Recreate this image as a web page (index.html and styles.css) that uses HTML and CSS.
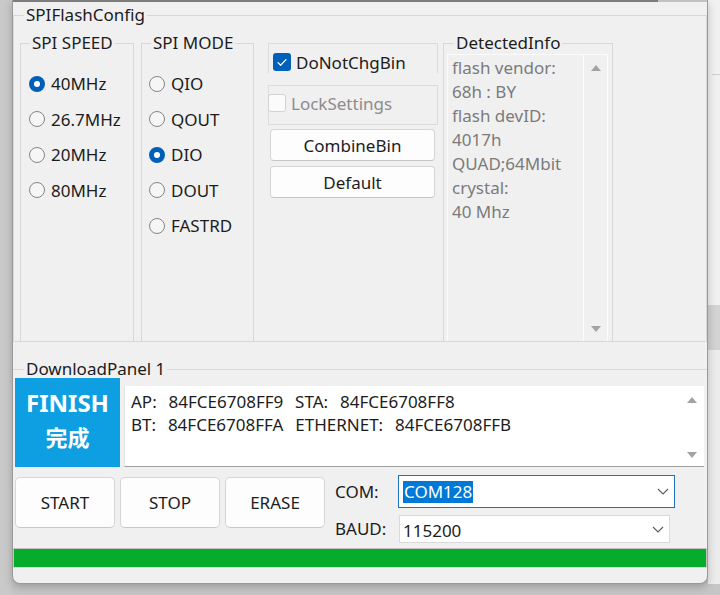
FILE: index.html
```html
<!DOCTYPE html>
<html lang="en">

<head>
    <meta charset="UTF-8">
    <meta name="viewport" content="width=device-width, initial-scale=1.0">
    <title>SPIFlashConfig</title>
    <link rel="stylesheet" href="styles.css">
</head>

<body>
    <div class="screen">
        <div class="edge-left"></div>

        <div class="window">
            <div class="topline"><span class="dark"></span><span class="light"></span></div>

            <fieldset class="group flash">
                <legend>SPIFlashConfig</legend>
                <div class="config-row">
                    <fieldset class="group sub speed">
                        <legend>SPI SPEED</legend>
                        <div class="radio-list">
                            <label class="radio checked"><span class="dot"></span>40MHz</label>
                            <label class="radio"><span class="dot"></span>26.7MHz</label>
                            <label class="radio"><span class="dot"></span>20MHz</label>
                            <label class="radio"><span class="dot"></span>80MHz</label>
                        </div>
                    </fieldset>

                    <fieldset class="group sub mode">
                        <legend>SPI MODE</legend>
                        <div class="radio-list">
                            <label class="radio"><span class="dot"></span>QIO</label>
                            <label class="radio"><span class="dot"></span>QOUT</label>
                            <label class="radio checked"><span class="dot"></span>DIO</label>
                            <label class="radio"><span class="dot"></span>DOUT</label>
                            <label class="radio"><span class="dot"></span>FASTRD</label>
                        </div>
                    </fieldset>

                    <div class="options">
                        <div class="frame frame-top">
                            <label class="check checked">
                                <span class="box">
                                    <svg width="18" height="18" viewBox="0 0 18 18">
                                        <path d="M5 9.6 L7.6 12.2 L13 6.6" fill="none" stroke="#fff" stroke-width="1.3" stroke-linecap="round" stroke-linejoin="round" />
                                    </svg>
                                </span>DoNotChgBin
                            </label>
                        </div>
                        <div class="frame frame-lock">
                            <label class="check disabled"><span class="box"></span>LockSettings</label>
                        </div>
                        <button class="btn">CombineBin</button>
                        <button class="btn">Default</button>
                    </div>

                    <fieldset class="group sub info">
                        <legend>DetectedInfo</legend>
                        <div class="info-box">
                            <div class="info-text">
                                flash vendor:<br>
                                68h : BY<br>
                                flash devID:<br>
                                4017h<br>
                                QUAD;64Mbit<br>
                                crystal:<br>
                                40 Mhz
                            </div>
                            <div class="scroll">
                                <span class="arrow up"></span>
                                <span class="arrow down"></span>
                            </div>
                        </div>
                    </fieldset>
                </div>
            </fieldset>

            <fieldset class="group download">
                <legend>DownloadPanel 1</legend>
                <div class="status-row">
                    <div class="finish">
                        <span class="finish-en">FINISH</span>
                        <span class="finish-cn">完成</span>
                    </div>
                    <div class="mac-box">
                        <div class="mac-text">
                            <div class="mac-line">AP:  84FCE6708FF9  STA:  84FCE6708FF8</div>
                            <div class="mac-line">BT:  84FCE6708FFA  ETHERNET:  84FCE6708FFB</div>
                        </div>
                        <div class="scroll">
                            <span class="arrow up"></span>
                            <span class="arrow down"></span>
                        </div>
                    </div>
                </div>

                <div class="control-row">
                    <button class="big-btn start">START</button>
                    <button class="big-btn">STOP</button>
                    <button class="big-btn">ERASE</button>

                    <div class="port-grid">
                        <span class="port-label">COM:</span>
                        <div class="combo com">
                            <span class="selected">COM128</span>
                            <svg class="chevron" width="12" height="7" viewBox="0 0 12 7">
                                <path d="M1 1 L6 6 L11 1" fill="none" stroke="#5c5c5c" stroke-width="1.1" />
                            </svg>
                        </div>
                        <span class="port-label">BAUD:</span>
                        <div class="combo baud">
                            <span>115200</span>
                            <svg class="chevron" width="12" height="7" viewBox="0 0 12 7">
                                <path d="M1 1 L6 6 L11 1" fill="none" stroke="#5c5c5c" stroke-width="1.1" />
                            </svg>
                        </div>
                    </div>
                </div>

                <div class="progress">
                    <div class="bar" style="width: 100%"></div>
                </div>
            </fieldset>
        </div>

        <div class="edge-right">
            <div class="er-top"><span class="er-line"></span></div>
            <div class="er-gray"></div>
            <div class="er-low"></div>
        </div>
    </div>
</body>

</html>
```

FILE: styles.css
```css
* {
    box-sizing: border-box;
}

body {
    margin: 0;
    width: 720px;
    height: 595px;
    overflow: hidden;
    background: #c6c6c6;
    font-family: "Noto Sans", "Noto Sans CJK SC", sans-serif;
    font-size: 17px;
    color: #1c1c1c;
}

.screen {
    display: flex;
    height: 595px;
}

.edge-left {
    width: 12px;
    flex: none;
    background: #c9c9c9;
}

.window {
    width: 696px;
    height: 584px;
    flex: none;
    display: flex;
    flex-direction: column;
    background: #f0f0f0;
    border: 1px solid #9a9a9a;
    border-top: none;
    border-radius: 0 0 8px 8px;
    box-shadow: 0 3px 8px rgba(0, 0, 0, 0.22);
    position: relative;
    z-index: 1;
}

.topline {
    display: flex;
    height: 2px;
}

.topline .dark {
    flex: 1;
    background: #7c7c7c;
}

.topline .light {
    width: 49px;
    background: #c2c2c2;
}

/* group boxes */
.group {
    margin: 0;
    padding: 0;
    min-width: 0;
    border: 1px solid #d8d8d8;
}

.group legend {
    padding: 0 2px;
    line-height: 20px;
    font-size: 17px;
}

.flash {
    margin-top: 3px;
}

.flash > legend {
    margin-left: 10px;
}

.config-row {
    display: flex;
    height: 316px;
    padding: 8px 0 0 6px;
}

.sub {
    border-bottom: none;
    display: flex;
    flex-direction: column;
}

.sub legend {
    margin-left: 9px;
}

.speed {
    width: 114px;
}

.mode {
    width: 113px;
    margin-left: 7px;
}

.radio-list {
    padding: 13px 0 0 8px;
}

.mode .radio-list {
    padding-left: 7px;
}

.radio {
    display: flex;
    align-items: center;
    gap: 6px;
    height: 35.5px;
    white-space: nowrap;
}

.dot {
    width: 16px;
    height: 16px;
    border-radius: 50%;
    border: 1px solid #858585;
    background: #f6f6f6;
    flex: none;
}

.radio.checked .dot {
    border: 5px solid #005fb8;
    background: #fff;
}

/* checkbox column */
.options {
    width: 170px;
    margin: 10px 0 0 14px;
    display: flex;
    flex-direction: column;
}

.frame {
    border: 1px solid #dcdcdc;
}

.frame-top {
    height: 30px;
    border-bottom: none;
}

.frame-lock {
    height: 40px;
    margin-top: 12px;
}

.check {
    display: flex;
    align-items: center;
    gap: 5px;
    height: 18px;
    white-space: nowrap;
}

.frame-top .check {
    margin: 9px 0 0 4px;
}

.frame-lock .check {
    margin: 8px 0 0 -1px;
}

.box {
    width: 18px;
    height: 18px;
    border-radius: 3px;
    flex: none;
    display: flex;
}

.check.checked .box {
    background: #005fb8;
}

.check.disabled .box {
    border: 1px solid #d2d2d2;
    background: #fbfbfb;
}

.check.disabled {
    color: #8c8c8c;
}

.btn {
    width: 165px;
    height: 32px;
    margin: 5px 0 0 2px;
    font-family: inherit;
    font-size: 17px;
    color: #1c1c1c;
    background: #fdfdfd;
    border: 1px solid #d5d5d5;
    border-bottom-color: #c6c6c6;
    border-radius: 4px;
    padding: 0;
}

.frame-lock + .btn {
    margin-top: 4px;
}

/* detected info */
.info {
    width: 170px;
    margin-left: 5px;
}

.info legend {
    margin-left: 10px;
}

.info-box {
    flex: 1;
    display: flex;
    margin: 1px 4px 0 3px;
    border: 1px solid #fbfbfb;
    border-bottom: none;
}

.info-text {
    flex: 1;
    padding: 1px 0 0 4px;
    line-height: 24px;
    color: #7b7b7b;
    white-space: nowrap;
}

.scroll {
    width: 24px;
    flex: none;
    display: flex;
    flex-direction: column;
    justify-content: space-between;
    align-items: center;
    border-left: 1px solid #fbfbfb;
}

.arrow {
    width: 0;
    height: 0;
    border-left: 5px solid transparent;
    border-right: 5px solid transparent;
}

.arrow.up {
    border-bottom: 6px solid #a3a3a3;
    margin-top: 10px;
}

.arrow.down {
    border-top: 6px solid #a3a3a3;
    margin-bottom: 9px;
}

/* download panel */
.download {
    margin-top: 17px;
    border-left: none;
    border-right: none;
    border-bottom: none;
}

.download > legend {
    margin-left: 11px;
}

.status-row {
    display: flex;
    height: 89px;
    margin-top: -1px;
}

.finish {
    width: 105px;
    margin-left: 2px;
    padding-top: 10px;
    background: #0e9fe2;
    color: #fff;
    font-weight: 700;
    display: flex;
    flex-direction: column;
    align-items: center;
}

.finish-en {
    font-size: 24px;
    line-height: 30px;
}

.finish-cn {
    font-size: 22px;
    line-height: 38px;
}

.mac-box {
    flex: 1;
    height: 81px;
    align-self: flex-end;
    margin: 0 3px 0 4px;
    display: flex;
    background: #fff;
    border-left: 1px solid #e4e4e4;
    border-bottom: 1px solid #9f9f9f;
}

.mac-text {
    flex: 1;
    padding: 4px 0 0 6px;
    line-height: 23px;
}

.mac-line {
    white-space: pre;
    word-spacing: 1.5px;
}

.mac-box .scroll {
    border-left: none;
}

.mac-box .arrow.up {
    margin-top: 11px;
}

.mac-box .arrow.down {
    margin-bottom: 8px;
}

.control-row {
    display: flex;
    align-items: flex-start;
    gap: 5px;
    margin-top: 10px;
}

.big-btn {
    width: 100px;
    height: 51px;
    padding: 0;
    font-family: inherit;
    font-size: 17px;
    color: #1c1c1c;
    background: #fdfdfd;
    border: 1px solid #d6d6d6;
    border-bottom-color: #c8c8c8;
    border-radius: 5px;
}

.big-btn.start {
    margin-left: 2px;
}

.port-grid {
    display: grid;
    grid-template-columns: 63px auto;
    grid-template-rows: 33px 28px;
    row-gap: 7px;
    align-items: center;
    margin: -2px 0 0 5px;
}

.port-label {
    line-height: 20px;
}

.combo {
    display: flex;
    align-items: center;
    justify-content: space-between;
    height: 100%;
    background: #fff;
    white-space: nowrap;
}

.combo.com {
    width: 277px;
    padding: 0 5px 0 4px;
    border: 1px solid #1f6fc5;
}

.combo.baud {
    width: 271px;
    margin-left: 1px;
    padding: 3px 5px 0 3px;
    border: 1px solid #dadada;
}

.combo.baud .chevron {
    margin-top: -3px;
}

.selected {
    background: #0078d7;
    color: #fff;
    line-height: 22px;
    padding: 0 1px;
}

.progress {
    height: 20px;
    margin-top: 5px;
    border: 1px solid #c2c2c2;
    border-bottom-color: #dedede;
    background: #e6e6e6;
}

.bar {
    height: 100%;
    background: #06ad2a;
}

/* desktop strip on the right */
.edge-right {
    flex: 1;
    display: flex;
    flex-direction: column;
}

.er-top {
    height: 305px;
    background: #f1f1f1;
    padding-top: 74px;
}

.er-line {
    display: block;
    height: 1px;
    margin-left: 4px;
    background: #cfcfcf;
}

.er-gray {
    height: 45px;
    background: #d3d3d3;
}

.er-low {
    height: 234px;
    background: #ececec;
}
```
